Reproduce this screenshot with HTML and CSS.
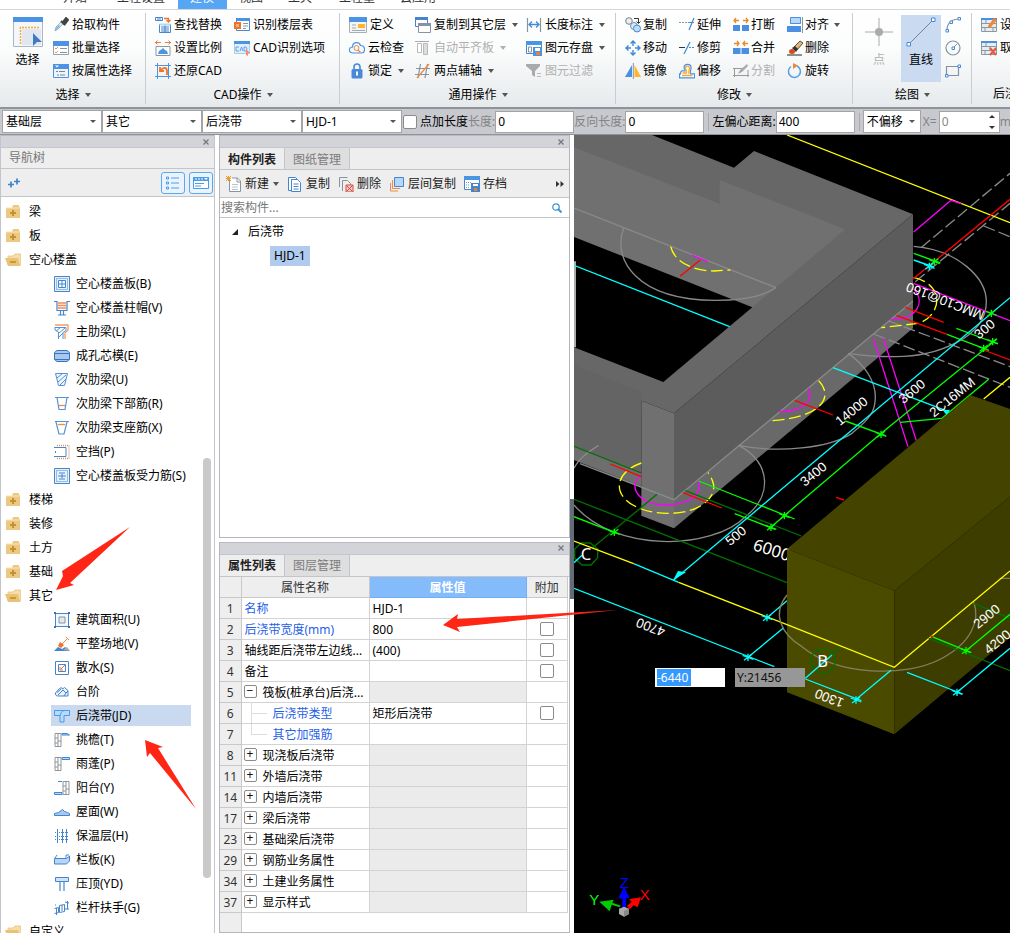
FILE: index.html
```html
<!DOCTYPE html>
<html lang="zh-CN">
<head>
<meta charset="utf-8">
<title>建模</title>
<link rel="stylesheet" href="styles.css">
</head>
<body>
<svg class="defs" aria-hidden="true">
  <symbol id="dropper" viewBox="0 0 16 16"><path d="M2 14l1-4 6-6 2 2-6 6z" fill="#dfe8ee" stroke="#8aa" stroke-width=".8"/><path d="M2 14l1-3 3-3 1 1-4 4z" fill="#6db3ee"/><path d="M8 4l4 4M10 5l3-4 2 2-3 4z" stroke="#444" stroke-width="2" fill="#444"/></symbol>
  <symbol id="checklist" viewBox="0 0 16 16"><path d="M.5 2.500h15v12H.5z" fill="#fff" stroke="#8fa3b5"/><path d="M0 1h16v5H0z" fill="#4b93e3"/><path d="M2 8l1 1 2-2M2 12l1 1 2-2" stroke="#f5933c" fill="none"/><path d="M7 8.500h7M7 12.500h7" stroke="#8794a0"/></symbol>
  <symbol id="proplist" viewBox="0 0 16 16"><path d="M.5 2.500h15v12H.5z" fill="#eef4fa" stroke="#4b93e3"/><path d="M0 1h16v5H0z" fill="#4b93e3"/><path d="M2 2.500h4l-2 2z" fill="#fff"/><path d="M3 8.500h2M6 8.500h6M4 12h2M7 12h5" stroke="#7b8894"/></symbol>
  <symbol id="find" viewBox="0 0 16 16"><path d="M.5.500h7v3h-7zM3 1v2M5 1v2M4.500 7.500h11v8h-11zM6 10h8M6 12h8M6 14h8M10 7v8" fill="none" stroke="#4786cc"/><path d="M4.500 6.500h11v2h-11z" fill="#b9d7f7"/><path d="M9 1.500h4.500V4M11.500 3l2 2 2-2" stroke="#e8752e" fill="none" stroke-width="1.300"/></symbol>
  <symbol id="scale" viewBox="0 0 16 16"><path d="M1 6.500h14v9H1z" fill="#fff" stroke="#8996a1"/><path d="M3 14l1-3 3-2 1-1 2 2 2 1 1 3z" fill="#4b93e3"/><path d="M0 2.500h6M2.500.500l-2 2 2 2M16 2.500h-6M13.500.500l2 2-2 2" stroke="#ee7a35" fill="none"/></symbol>
  <symbol id="restore" viewBox="0 0 16 16"><path d="M2.500 0v16M0 2.500h16M13.500 0v16M0 13.500h16" stroke="#4b93e3"/><path d="M12 12V8c0-4-4-4-6-1M5 4v4h4" fill="none" stroke="#ef7427" stroke-width="1.800"/></symbol>
  <symbol id="floors" viewBox="0 0 16 16"><path d="M2.500 1.500h13v12h-13z" fill="#fff" stroke="#4b87c8"/><path d="M2 1h14v3H2z" fill="#4b93e3"/><path d="M0 5h7v7H0z" fill="#ee7427"/><path d="M2 7h3v3H2z" fill="#f7ad76"/><path d="M9 6.500h5M9 9h5M9 11.500h3" stroke="#8996a1"/></symbol>
  <symbol id="cadscan" viewBox="0 0 16 16"><path d="M.5 1.500h15v12H.5z" fill="#e1eefc" stroke="#a8cdf2"/><path d="M0 1h16v3H0z" fill="#4b93e3"/><path d="M5 7H2v4h3M6 11l1.500-4L9 11M10 7h2l1 2-1 2h-2z" fill="none" stroke="#63a2e5"/><path d="M12 9l4 4-2 .300V16l-1.500-1L12 16z" fill="#f58e68"/></symbol>
  <symbol id="define" viewBox="0 0 18 16"><path d="M.5.500h17v15H.5z" fill="#f5f5f5" stroke="#a6b0b8"/><path d="M0 0h18v5H0z" fill="#4b93e3"/><path d="M9 7h7v4H9z" fill="#ffb52e"/><path d="M3 8h4M3 11h4M3 13.500h13" stroke="#a3abb2"/></symbol>
  <symbol id="cloud" viewBox="0 0 16 16"><path d="M4 13C-1 13-.500 7 3.500 7 3.500 2 10 1 11.500 5.500c5 0 5.500 7 1 7.500z" fill="#f3f9ff" stroke="#4b93e3" stroke-width="1.200"/><circle cx="7.500" cy="8" r="2.500" fill="none" stroke="#ef8b43"/><path d="M9 10l2.500 2.500" stroke="#ef8b43" stroke-width="1.500"/></symbol>
  <symbol id="lock" viewBox="0 0 16 16"><path d="M5 7V4c0-4 6-4 6 0v3" fill="none" stroke="#4889dc" stroke-width="1.600"/><rect x="2.500" y="6" width="11" height="9.500" rx="1.500" fill="#4889dc"/><path d="M8 8.500v4" stroke="#fff" stroke-width="2"/></symbol>
  <symbol id="copyfloor" viewBox="0 0 16 16"><path d="M.5.500h12v9H.5z" fill="#fff" stroke="#4584cc"/><path d="M0 0h13v3H0z" fill="#4584cc"/><path d="M3.500 6.500h12v9h-12z" fill="#fff" stroke="#8793a0"/><path d="M3 6h13v3H3z" fill="#8793a0"/></symbol>
  <symbol id="flatten" viewBox="0 0 16 16"><path d="M0 1.500h14" stroke="#aaa"/><path d="M2.500 3.500h4v9h-4z" fill="#fff" stroke="#b9b9b9"/><path d="M8.500 3.500h4v11h-4z" fill="#ddd" stroke="#b9b9b9"/></symbol>
  <symbol id="axis2" viewBox="0 0 16 16"><path d="M5.500 1L3 15M12.500 1L10 15M1 5.500h14M0 11.500h14" stroke="#8693a0" stroke-width="1.200"/><path d="M14 1L2 15" stroke="#ef8b43" stroke-width="1.300"/></symbol>
  <symbol id="dim" viewBox="0 0 16 16"><path d="M1.500 1v14M14.500 1v14" stroke="#8a949e" stroke-width="1.200"/><path d="M3 7.500h10M6 4.500l-3 3 3 3M10 4.500l3 3-3 3" fill="none" stroke="#4489d8" stroke-width="1.300"/></symbol>
  <symbol id="savegfx" viewBox="0 0 16 16"><path d="M.5 1.500h15v12H.5z" fill="#fff" stroke="#4b87c8"/><path d="M0 1h16v4H0z" fill="#4b93e3"/><path d="M2.500 7h3v5h-3z" fill="none" stroke="#8793a0"/><path d="M7 7h9v9H7z" fill="#4b93e3"/><path d="M9 8h5v3H9z" fill="#fff"/><path d="M10 12h4v3h-4z" fill="#ef8033"/></symbol>
  <symbol id="filter" viewBox="0 0 16 16"><path d="M0 1h14v2L9 8v6l-3-2V8L0 3z" fill="#aaa"/><path d="M11 10.500h4M11 13.500h4" stroke="#bbb"/></symbol>
  <symbol id="copy2" viewBox="0 0 16 16"><circle cx="4" cy="4" r="3.300" fill="#eee" stroke="#738390"/><circle cx="9" cy="9" r="3.500" fill="#d8ecfb" stroke="#6d8eaa"/><circle cx="12" cy="11.500" r="3.500" fill="#bddefa" stroke="#4489d8"/><path d="M9 1.500h4.500V6M11.500 4.500l2 2 2-2" fill="none" stroke="#333"/></symbol>
  <symbol id="move" viewBox="0 0 16 16"><path d="M8 1v5M8 10v5M1 8h5M10 8h5M5.500 3.500L8 1l2.500 2.500M5.500 12.500L8 15l2.500-2.500M3.500 5.500L1 8l2.500 2.500M12.500 5.500L15 8l-2.500 2.500" fill="none" stroke="#3f88dc" stroke-width="1.400"/></symbol>
  <symbol id="mirror" viewBox="0 0 16 16"><path d="M7 2v12H0z" fill="#4a90e2"/><path d="M9.500 2v12H16z" fill="#ffb52e"/><path d="M8.300 0v16" stroke="#8793a0"/></symbol>
  <symbol id="extend" viewBox="0 0 16 16"><path d="M0 5.500h10" stroke="#8796a3" stroke-dasharray="2 1"/><path d="M15 1l-5 12M10 5.500h5" stroke="#4489d8" stroke-width="1.200"/></symbol>
  <symbol id="trim" viewBox="0 0 16 16"><path d="M10 7.500h6" stroke="#4489d8" stroke-dasharray="2 1"/><path d="M0 7.500h6" stroke="#333"/><path d="M11 2L5 14" stroke="#4489d8" stroke-width="1.300"/></symbol>
  <symbol id="offset" viewBox="0 0 16 16"><path d="M.6 14.800h15v-4h-4c-1-2 .5-4 .5-6 0-4.500-7-4.500-7 0 0 1 .8 1.500 1 3h-3c-1.500 0-1.500 1.500-1.500 3h-1z" fill="#fff" stroke="#4a90e2" stroke-width="1.200"/><path d="M3 12.500h10.500M3.500 10h4c.5-2-1-3.500-1-5 0-2.500 4-2.500 4 0 0 2-1.500 3.500-.5 6" fill="none" stroke="#f5a82c" stroke-width="1.300"/></symbol>
  <symbol id="split" viewBox="0 0 16 16"><path d="M0 8h7v6H0zM9 8h7v6H9z" fill="#4a90e2"/><path d="M1 3.500h5M3 1L1 3.500 3 6M15 3.500h-5M13 1l2 2.500L13 6" fill="none" stroke="#e98a20" stroke-width="1.300"/></symbol>
  <symbol id="merge" viewBox="0 0 16 16"><path d="M0 8h7.500v6H0zM8.500 8H16v6H8.500z" fill="#4a90e2"/><path d="M1 3.500h5M4 1l2 2.500L4 6M15 3.500h-5M12 1l-2 2.500L12 6" fill="none" stroke="#e98a20" stroke-width="1.300"/></symbol>
  <symbol id="cut" viewBox="0 0 16 16"><path d="M1.500 5v9M15 7v7M0 5.500h9M0 12.500h16" stroke="#999" fill="none"/><path d="M5 11l2-4 7-6 1 2-6 6z" fill="#aaa"/></symbol>
  <symbol id="align" viewBox="0 0 16 16"><path d="M3.500.500h10v6h-10z" fill="#b5d8fa" stroke="#4a90e2"/><path d="M0 9h14v6H0z" fill="#4a90e2"/><path d="M15.500 0v16" stroke="#8894a0"/></symbol>
  <symbol id="erase" viewBox="0 0 16 16"><path d="M0 15h15" stroke="#222"/><path d="M7 7l6-6 3 2-6 7z" fill="#e9b173" stroke="#553"/><path d="M5 8l3-2 3 3-2 3z" fill="#333"/><ellipse cx="5" cy="11.500" rx="3" ry="2.500" fill="#d94b1c"/></symbol>
  <symbol id="rotate" viewBox="0 0 16 16"><path d="M10 3a6 6 0 1 1-6 .500" fill="none" stroke="#5b9fe6" stroke-width="1.500"/><path d="M6 0l5 2.500L6 6z" fill="#ef8532"/></symbol>
  <symbol id="curve" viewBox="0 0 16 16"><path d="M2 13C2 6 7 2 14 2" fill="none" stroke="#8592a0" stroke-width="1.200"/><path d="M1 12.500h2.500V15H1zM5 4h2.500v2.500H5zM13 .500h2.500V3H13z" fill="#fff" stroke="#4489d8"/></symbol>
  <symbol id="circle" viewBox="0 0 16 16"><circle cx="8" cy="8" r="7" fill="none" stroke="#8592a0" stroke-width="1.200"/><path d="M8 8l4-4" stroke="#8592a0"/><path d="M7 7h2.500v2.500H7z" fill="#fff" stroke="#4489d8"/></symbol>
  <symbol id="rect" viewBox="0 0 16 16"><path d="M1.500 3.500h12v9h-12z" fill="none" stroke="#8592a0" stroke-width="1.200"/><path d="M.5 11.500H3V14H.5zM13 2h2.500v2.500H13z" fill="#fff" stroke="#4489d8"/></symbol>
  <symbol id="wall" viewBox="0 0 16 16"><path d="M.5 2.500h15v12H.5z" fill="#e7ecf0" stroke="#8a98a4"/><path d="M0 6.500h16M0 10.500h16M5 3v4M9 7v4M4 11v4M12 11v4" stroke="#8a98a4"/><path d="M0 2h16" stroke="#4a90e2" stroke-width="2"/></symbol>
  <symbol id="pencil" viewBox="0 0 16 16"><path d="M7 9l6-8 3 2-6 7-3 1z" fill="#f18731"/></symbol>
  <symbol id="redx" viewBox="0 0 16 16"><path d="M9 8l6 7M15 8l-6 7" stroke="#e7593f" stroke-width="2"/></symbol>
  <symbol id="close" viewBox="0 0 6 6"><path d="M.5.500l5 5M5.500.500l-5 5" stroke="#777" stroke-width="1.300"/></symbol>
  <symbol id="folder" viewBox="0 0 16 14"><path d="M8 0h6v2h1v11H1V3h6z" fill="#edc880"/><path d="M1 3h14" stroke="#f7e3b8"/><path d="M8 5v6M5 8h6" stroke="#c1923a" stroke-width="2"/></symbol>
  <symbol id="open" viewBox="0 0 16 14"><path d="M3 3h5l2-2h6v11H3z" fill="#f5ddaa" stroke="#e5bf72" stroke-width=".7"/><path d="M0 5h13l2 8H3z" fill="#e9c276"/><path d="M5 9h6" stroke="#b98a33" stroke-width="1.500"/></symbol>
  <symbol id="t-slab" viewBox="0 0 16 16"><path d="M.5.500h15v15H.5z" fill="#e8f1fb" stroke="#4585cc"/><path d="M2.500 2.500h11v11h-11z" fill="none" stroke="#4585cc" stroke-dasharray="1 1"/><path d="M4.500 4.500h7v7h-7zM8 4v8M4 8h8" fill="#fff" stroke="#4585cc"/></symbol>
  <symbol id="t-cap" viewBox="0 0 16 16"><path d="M0 1.500h3v9h10v-9h3M6.500 11v4M9.500 11v4M4 15h8" fill="none" stroke="#4585cc" stroke-width="1.200"/><path d="M4 3h8M4 5.500h8M4 8h8" stroke="#ef8b53" stroke-width="1.300"/></symbol>
  <symbol id="t-main" viewBox="0 0 16 16"><path d="M1 3.500h11v3l-3 2V15M4.500 15V8L1 6V3M2 7l4-3M5 9l6-5M5 13l4-4" fill="none" stroke="#5592d5"/><path d="M1 1h13v5l-3 3v6" fill="none" stroke="#f29b6c" stroke-width="1.300"/></symbol>
  <symbol id="t-core" viewBox="0 0 16 16"><path d="M3 2.500h10l2.500 2v7l-2.500 2H3l-2.500-2v-7z" fill="#a7c8f0" stroke="#3b73b8"/><path d="M1 5.500h14M1 11.500h14" stroke="#3b73b8"/></symbol>
  <symbol id="t-sec" viewBox="0 0 16 16"><path d="M1.500 1.500h12l-3 12h-6z" fill="#edf5fd" stroke="#5592d5"/><path d="M3 6l5-4M4 10l8-7M6 13l6-6" stroke="#5592d5"/></symbol>
  <symbol id="t-bot" viewBox="0 0 16 16"><path d="M1 1.500h2l2 12h6l2-12h2M3 1.500h10" fill="none" stroke="#5592d5" stroke-width="1.200"/><path d="M5 9.500h6" stroke="#ef8b43" stroke-width="1.300"/></symbol>
  <symbol id="t-sup" viewBox="0 0 16 16"><path d="M1 1.500h14M2 2l3 12h5l3-12" fill="none" stroke="#5592d5" stroke-width="1.200"/><path d="M4 4.500h7" stroke="#ef8b43" stroke-width="1.300"/></symbol>
  <symbol id="t-gap" viewBox="0 0 16 16"><path d="M0 3.500h12v9H0M1.500 7v2" fill="none" stroke="#4585cc"/><path d="M3 1.500h12v13H3" fill="none" stroke="#ef8b53" stroke-width="1.300" stroke-dasharray="1 1"/></symbol>
  <symbol id="t-force" viewBox="0 0 16 16"><path d="M.5.500h15v15H.5z" fill="#e8f1fb" stroke="#4585cc"/><path d="M2.500 2.500h11v11h-11z" fill="none" stroke="#4585cc" stroke-dasharray="1 1"/><path d="M8 4v8M4 8h8M5 5h2M9 5h2M5 11h2M9 11h2" stroke="#4585cc"/></symbol>
  <symbol id="t-area" viewBox="0 0 16 16"><path d="M1.500 1.500h13v13h-13z" fill="#f2f8ff" stroke="#4585cc"/><path d="M5 5h6v6H5z" fill="#e5e7ea" stroke="#8795a3"/><path d="M0 0h2v2H0zM14 0h2v2h-2zM0 14h2v2H0zM14 14h2v2h-2z" fill="#476f9c"/></symbol>
  <symbol id="t-level" viewBox="0 0 16 16"><path d="M0 15l4-4 4 2 3-2 5 4z" fill="#4585cc"/><path d="M9 14l4-3 3 4z" fill="#aaa"/><path d="M7 9l7-7M12 1l3 3" stroke="#ef8b43"/><path d="M4 10l2-4 4 3-3 3z" fill="#ee7427"/></symbol>
  <symbol id="t-apron" viewBox="0 0 16 16"><path d="M1.500 1.500h13v13h-13zM4.500 4.500h7v7h-7z" fill="#fff" stroke="#4585cc"/><path d="M11 5l-4 4M6 7v3h3" fill="none" stroke="#ef7427"/></symbol>
  <symbol id="t-step" viewBox="0 0 16 16"><path d="M1.500 9l4-4.500c1-1 3-1 3 .5l2-1.500 3.500 3v5.500H4c-2 0-3-1.500-2.500-3z" fill="#eaf3fc" stroke="#4585cc"/><path d="M3 8.500l4-3.500M4 11l5-5M9 6l3 3-2 3M12 9l2-2" fill="none" stroke="#4585cc"/></symbol>
  <symbol id="t-strip" viewBox="0 0 16 16"><path d="M.5 2.500h15v5H10v6.500H6V7.500H.5z" fill="#b9dafb" stroke="#4a9be8"/><path d="M10 2.500C8 3 6.500 5 6 8" fill="none" stroke="#4a9be8"/></symbol>
  <symbol id="t-eave" viewBox="0 0 16 16"><path d="M1 1.500h6v13H1zM4 1v13M1 6h3M4 9h3M1 11h3" fill="none" stroke="#8f9498"/><path d="M8 1.500h5l2.500 1.500H8z" fill="#b9dafb" stroke="#4585cc"/></symbol>
  <symbol id="t-canopy" viewBox="0 0 16 16"><path d="M1 1.500h6v13H1zM4 1v13M1 6h3M4 9h3M1 11h3" fill="none" stroke="#8f9498"/><path d="M8 1.500h7.500v2H8z" fill="#b9dafb" stroke="#4585cc"/></symbol>
  <symbol id="t-balcony" viewBox="0 0 16 16"><path d="M9 1.500h6v13H9zM12 1v13M9 6h3M12 9h3M9 11h3" fill="none" stroke="#8f9498"/><path d="M4 1.500h4M.5 12.500H8v2H.5z" fill="#b9dafb" stroke="#4585cc"/></symbol>
  <symbol id="t-roof" viewBox="0 0 16 16"><path d="M.5 11.500v-2l4-1 4-3 2 2 3 1 2 1v2z" fill="#a7c8f0" stroke="#4585cc"/></symbol>
  <symbol id="t-insul" viewBox="0 0 16 16"><path d="M3.500 1v14M8.500 1v14M12.500 1v14" stroke="#4585cc"/><path d="M1 4.500h14M1 8.500h14M1 11.500h14" stroke="#4585cc" stroke-dasharray="1 1"/></symbol>
  <symbol id="t-rail" viewBox="0 0 16 16"><path d="M.5 6.500h12l3-2.500v5l-3 3H.5z" fill="#b9d4f4" stroke="#4585cc"/><path d="M1 6l2-3M12 6V3h3" fill="none" stroke="#4585cc"/></symbol>
  <symbol id="t-coping" viewBox="0 0 16 16"><path d="M1.500 1.500h13v4h-13z" fill="#cfe3fa" stroke="#4585cc"/><path d="M6 6v9M10 6v9" stroke="#4585cc" stroke-width="1.200"/></symbol>
  <symbol id="t-hand" viewBox="0 0 16 16"><path d="M.5 8.500l4-1v5l-4 1M2.500 8v7M5.500 5.500l5-1v7l-5 1zM8 5v6M11 2l4 1M13.500 1v8M11 9h4M1 5h1" fill="none" stroke="#4585cc"/></symbol>
</svg>

<nav class="tabs">
  <button class="tab">开始</button><button class="tab">工程设置</button><button class="tab on">建模</button><button class="tab">视图</button><button class="tab">工具</button><button class="tab">工程量</button><button class="tab">云应用</button>
</nav>

<header class="ribbon">
  <section class="group g-select">
    <div class="cmds">
      <button class="big"><svg class="i30" viewBox="0 0 30 30"><path d="M.5.500h29v29H.5z" fill="#f3f6fa" stroke="#a9b7c6"/><path d="M0 0h30v5H0z" fill="#4b93e3"/><path d="M7.500 27V10.500H27" fill="none" stroke="#f3ae2c" stroke-width="1.500" stroke-dasharray="2 1"/><path d="M9 12h19v16H9z" fill="#e2e7ef"/><path d="M20 16l9 9h-5l-4 4z" fill="#3f7bc4"/></svg>选择</button>
      <div class="col">
        <button class="cmd"><svg><use href="#dropper"/></svg>拾取构件</button>
        <button class="cmd"><svg><use href="#checklist"/></svg>批量选择</button>
        <button class="cmd"><svg><use href="#proplist"/></svg>按属性选择</button>
      </div>
    </div>
    <button class="gname">选择<i class="caret"></i></button>
  </section>
  <section class="group g-cad">
    <div class="cmds">
      <div class="col">
        <button class="cmd"><svg><use href="#find"/></svg>查找替换</button>
        <button class="cmd"><svg><use href="#scale"/></svg>设置比例</button>
        <button class="cmd"><svg><use href="#restore"/></svg>还原CAD</button>
      </div>
      <div class="col">
        <button class="cmd"><svg><use href="#floors"/></svg>识别楼层表</button>
        <button class="cmd"><svg><use href="#cadscan"/></svg>CAD识别选项</button>
      </div>
    </div>
    <button class="gname">CAD操作<i class="caret"></i></button>
  </section>
  <section class="group g-common">
    <div class="cmds">
      <div class="col">
        <button class="cmd"><svg class="wide"><use href="#define"/></svg>定义</button>
        <button class="cmd"><svg><use href="#cloud"/></svg>云检查</button>
        <button class="cmd"><svg><use href="#lock"/></svg>锁定<i class="caret"></i></button>
      </div>
      <div class="col">
        <button class="cmd"><svg><use href="#copyfloor"/></svg>复制到其它层<i class="caret"></i></button>
        <button class="cmd" disabled><svg><use href="#flatten"/></svg>自动平齐板<i class="caret"></i></button>
        <button class="cmd"><svg><use href="#axis2"/></svg>两点辅轴<i class="caret"></i></button>
      </div>
      <div class="col">
        <button class="cmd"><svg><use href="#dim"/></svg>长度标注<i class="caret"></i></button>
        <button class="cmd"><svg><use href="#savegfx"/></svg>图元存盘<i class="caret"></i></button>
        <button class="cmd" disabled><svg><use href="#filter"/></svg>图元过滤</button>
      </div>
    </div>
    <button class="gname">通用操作<i class="caret"></i></button>
  </section>
  <section class="group g-modify">
    <div class="cmds">
      <div class="col">
        <button class="cmd"><svg><use href="#copy2"/></svg>复制</button>
        <button class="cmd"><svg><use href="#move"/></svg>移动</button>
        <button class="cmd"><svg><use href="#mirror"/></svg>镜像</button>
      </div>
      <div class="col">
        <button class="cmd"><svg><use href="#extend"/></svg>延伸</button>
        <button class="cmd"><svg><use href="#trim"/></svg>修剪</button>
        <button class="cmd"><svg><use href="#offset"/></svg>偏移</button>
      </div>
      <div class="col">
        <button class="cmd"><svg><use href="#split"/></svg>打断</button>
        <button class="cmd"><svg><use href="#merge"/></svg>合并</button>
        <button class="cmd" disabled><svg><use href="#cut"/></svg>分割</button>
      </div>
      <div class="col">
        <button class="cmd"><svg><use href="#align"/></svg>对齐<i class="caret"></i></button>
        <button class="cmd"><svg><use href="#erase"/></svg>删除</button>
        <button class="cmd"><svg><use href="#rotate"/></svg>旋转</button>
      </div>
    </div>
    <button class="gname">修改<i class="caret"></i></button>
  </section>
  <section class="group g-draw">
    <div class="cmds">
      <button class="big" disabled><svg class="i30" viewBox="0 0 30 30"><path d="M15 1v28M1 15h28" stroke="#aaa"/><circle cx="15" cy="15" r="4" fill="#aaa"/></svg>点</button>
      <button class="big on"><svg class="i30" viewBox="0 0 30 30"><path d="M3 27L27 3" stroke="#6f86a3"/><path d="M1 25.500h3.500V29H1zM25.500 1H29v3.500h-3.500z" fill="#fff" stroke="#4489d8"/></svg>直线</button>
      <div class="col">
        <button class="cmd" aria-label="弧线"><svg><use href="#curve"/></svg></button>
        <button class="cmd" aria-label="圆"><svg><use href="#circle"/></svg></button>
        <button class="cmd" aria-label="矩形"><svg><use href="#rect"/></svg></button>
      </div>
    </div>
    <button class="gname">绘图<i class="caret"></i></button>
  </section>
  <section class="group g-more">
    <div class="cmds">
      <div class="col">
        <button class="cmd"><svg><use href="#wall"/><use href="#pencil"/></svg>设置</button>
        <button class="cmd"><svg><use href="#wall"/><use href="#redx"/></svg>取消</button>
      </div>
    </div>
    <button class="gname">后浇带</button>
  </section>
</header>

<form class="options">
  <span class="pick"><select aria-label="楼层"><option>基础层</option></select></span>
  <span class="pick"><select aria-label="分类"><option>其它</option></select></span>
  <span class="pick"><select aria-label="类型"><option>后浇带</option></select></span>
  <span class="pick"><select aria-label="构件"><option>HJD-1</option></select></span>
  <input type="checkbox" class="box" id="addlen"><label class="addlen" for="addlen">点加长度</label>
  <label class="dim" for="len">长度:</label><input class="num" id="len" value="0">
  <label class="dim" for="rlen">反向长度:</label><input class="num" id="rlen" value="0">
  <i class="sep"></i>
  <label for="ecc">左偏心距离:</label><input class="num" id="ecc" value="400">
  <i class="sep"></i>
  <span class="pick short"><select aria-label="偏移方式"><option>不偏移</option></select></span>
  <label class="dim xlab" for="xoff">X=</label><span class="spin"><input class="num" id="xoff" value="0" disabled></span>
  <span class="dim">mm</span>
</form>

<main class="work">
  <aside class="navpane">
    <div class="strip"><button aria-label="关闭"><svg><use href="#close"/></svg></button></div>
    <h2 class="navtitle">导航树</h2>
    <div class="navtools">
      <button class="plus" aria-label="添加"><svg viewBox="0 0 12 10"><path d="M3 3.500v6M0 6.500h6M9 .500v6M6 3.500h6" stroke="#3f82d0" stroke-width="1.700"/></svg></button>
      <button class="mode" aria-label="列表视图"><svg viewBox="0 0 16 16"><path d="M1.500 2h2v2h-2zM1.500 7h2v2h-2zM1.500 12h2v2h-2zM6 3h8M6 8h8M6 13h8" fill="none" stroke="#4a9be8"/></svg></button>
      <button class="mode" aria-label="面板视图"><svg viewBox="0 0 16 16"><path d="M.5 2.500h15v11H.5z" fill="#fff" stroke="#4a9be8"/><path d="M0 2h16v4H0z" fill="#4a9be8"/><path d="M2 4h2M5 4h2M8 4h2" stroke="#fff"/><path d="M11 3h4l-2 2z" fill="#fff"/><path d="M2 8.500h9M2 11h6" stroke="#4a9be8"/></svg></button>
    </div>
    <div class="treebox">
      <ul class="tree">
        <li><button class="node"><svg><use href="#folder"/></svg>梁</button></li>
        <li><button class="node"><svg><use href="#folder"/></svg>板</button></li>
        <li><button class="node"><svg><use href="#open"/></svg>空心楼盖</button>
          <ul>
            <li><button class="leaf"><svg><use href="#t-slab"/></svg>空心楼盖板(B)</button></li>
            <li><button class="leaf"><svg><use href="#t-cap"/></svg>空心楼盖柱帽(V)</button></li>
            <li><button class="leaf"><svg><use href="#t-main"/></svg>主肋梁(L)</button></li>
            <li><button class="leaf"><svg><use href="#t-core"/></svg>成孔芯模(E)</button></li>
            <li><button class="leaf"><svg><use href="#t-sec"/></svg>次肋梁(U)</button></li>
            <li><button class="leaf"><svg><use href="#t-bot"/></svg>次肋梁下部筋(R)</button></li>
            <li><button class="leaf"><svg><use href="#t-sup"/></svg>次肋梁支座筋(X)</button></li>
            <li><button class="leaf"><svg><use href="#t-gap"/></svg>空挡(P)</button></li>
            <li><button class="leaf"><svg><use href="#t-force"/></svg>空心楼盖板受力筋(S)</button></li>
          </ul></li>
        <li><button class="node"><svg><use href="#folder"/></svg>楼梯</button></li>
        <li><button class="node"><svg><use href="#folder"/></svg>装修</button></li>
        <li><button class="node"><svg><use href="#folder"/></svg>土方</button></li>
        <li><button class="node"><svg><use href="#folder"/></svg>基础</button></li>
        <li><button class="node"><svg><use href="#open"/></svg>其它</button>
          <ul>
            <li><button class="leaf"><svg><use href="#t-area"/></svg>建筑面积(U)</button></li>
            <li><button class="leaf"><svg><use href="#t-level"/></svg>平整场地(V)</button></li>
            <li><button class="leaf"><svg><use href="#t-apron"/></svg>散水(S)</button></li>
            <li><button class="leaf"><svg><use href="#t-step"/></svg>台阶</button></li>
            <li><button class="leaf on"><svg><use href="#t-strip"/></svg>后浇带(JD)</button></li>
            <li><button class="leaf"><svg><use href="#t-eave"/></svg>挑檐(T)</button></li>
            <li><button class="leaf"><svg><use href="#t-canopy"/></svg>雨蓬(P)</button></li>
            <li><button class="leaf"><svg><use href="#t-balcony"/></svg>阳台(Y)</button></li>
            <li><button class="leaf"><svg><use href="#t-roof"/></svg>屋面(W)</button></li>
            <li><button class="leaf"><svg><use href="#t-insul"/></svg>保温层(H)</button></li>
            <li><button class="leaf"><svg><use href="#t-rail"/></svg>栏板(K)</button></li>
            <li><button class="leaf"><svg><use href="#t-coping"/></svg>压顶(YD)</button></li>
            <li><button class="leaf"><svg><use href="#t-hand"/></svg>栏杆扶手(G)</button></li>
          </ul></li>
        <li><button class="node"><svg><use href="#open"/></svg>自定义</button></li>
      </ul>
      <i class="thumb"></i>
    </div>
  </aside>

  <div class="mid">
    <section class="panel parts">
      <div class="strip"><button aria-label="关闭"><svg><use href="#close"/></svg></button></div>
      <div class="ptabs"><button class="on">构件列表</button><button>图纸管理</button></div>
      <div class="ptools">
        <button class="t-new"><svg viewBox="0 0 16 16"><path d="M3.500 3v12.500h11V5l-3-3H6M11 2v4h4" fill="#fff" stroke="#8795a3"/><path d="M6 8.500h6M6 11h6M6 13.500h6" stroke="#bcc5cd"/><path d="M0 0l5 5M5 0L0 5M2.500 0v5M0 2.500h5" stroke="#ef9a2c"/></svg>新建<i class="caret"></i></button>
        <button><svg viewBox="0 0 16 16"><path d="M1.500 1.500h7l3 3v10h-10z" fill="#fff" stroke="#4585cc"/><path d="M4.500 3.500h6l3 3v9h-9z" fill="#fff" stroke="#4585cc"/><path d="M6.500 8h5M6.500 10.500h5M6.500 13h5" stroke="#4585cc"/></svg>复制</button>
        <button><svg viewBox="0 0 16 16"><path d="M1.500 11V1.500h8M4.500 15V4.500h5l3 3V9" fill="none" stroke="#8795a3"/><path d="M8 9h7v7H8z" fill="#f4cfcb" stroke="#d5453b"/><path d="M9 10l5 5M14 10l-5 5" stroke="#d5453b"/></svg>删除</button>
        <button><svg viewBox="0 0 16 16"><path d="M5.500 1.500h9v9h-9z" fill="#b5d8fa" stroke="#4585cc"/><path d="M3.500 4v8.500H11M1.500 7v8H9" fill="none" stroke="#ef8b43"/></svg>层间复制</button>
        <button><svg viewBox="0 0 16 16"><path d="M.5 1.500h15v12H.5z" fill="#fff" stroke="#4585cc"/><path d="M0 0h16v4H0z" fill="#4b93e3"/><path d="M2 6.500h5M2 9h4M2 11.500h4" stroke="#8795a3" stroke-dasharray="1 1"/><path d="M7 7h9v9H7z" fill="#4585cc"/><path d="M9 8h5v2H9z" fill="#fff"/><path d="M10 12h3v3h-3z" fill="#ef8033"/></svg>存档</button>
        <button class="more" aria-label="更多"><svg viewBox="0 0 8 6"><path d="M0 0l3.500 3L0 6zM4.500 0L8 3 4.500 6z" fill="#333"/></svg></button>
      </div>
      <div class="search"><input type="text" aria-label="搜索构件" placeholder="搜索构件..."><svg viewBox="0 0 10 10"><circle cx="4" cy="4" r="3.200" fill="none" stroke="#4096d2" stroke-width="1.300"/><path d="M6.500 6.500L9.500 9.500" stroke="#4096d2" stroke-width="2"/></svg></div>
      <div class="parttree">
        <button class="proot"><svg viewBox="0 0 6 6"><path d="M6 0v6H0z" fill="#222"/></svg>后浇带</button>
        <button class="pleaf">HJD-1</button>
      </div>
    </section>

    <section class="panel props">
      <div class="strip"><button aria-label="关闭"><svg><use href="#close"/></svg></button></div>
      <div class="ptabs"><button class="on">属性列表</button><button>图层管理</button></div>
      <div class="sheet">
        <table>
          <colgroup><col class="c-no"><col class="c-name"><col class="c-val"><col class="c-add"></colgroup>
          <thead><tr><th></th><th>属性名称</th><th class="hot">属性值</th><th>附加</th></tr></thead>
          <tbody>
            <tr><th>1</th><td class="key">名称</td><td>HJD-1</td><td></td></tr>
            <tr><th>2</th><td class="key">后浇带宽度(mm)</td><td>800</td><td class="tick"><input type="checkbox" class="box" aria-label="附加 后浇带宽度"></td></tr>
            <tr><th>3</th><td>轴线距后浇带左边线...</td><td>(400)</td><td class="tick"><input type="checkbox" class="box" aria-label="附加 轴线距"></td></tr>
            <tr><th>4</th><td>备注</td><td></td><td class="tick"><input type="checkbox" class="box" aria-label="附加 备注"></td></tr>
            <tr><th>5</th><td><button class="tog" aria-label="收起">−</button>筏板(桩承台)后浇...</td><td class="off"></td><td></td></tr>
            <tr><th>6</th><td class="key sub">后浇带类型</td><td>矩形后浇带</td><td class="tick"><input type="checkbox" class="box" aria-label="附加 后浇带类型"></td></tr>
            <tr><th>7</th><td class="key sub last">其它加强筋</td><td></td><td></td></tr>
            <tr><th>8</th><td><button class="tog" aria-label="展开">+</button>现浇板后浇带</td><td class="off"></td><td></td></tr>
            <tr><th>11</th><td><button class="tog" aria-label="展开">+</button>外墙后浇带</td><td class="off"></td><td></td></tr>
            <tr><th>14</th><td><button class="tog" aria-label="展开">+</button>内墙后浇带</td><td class="off"></td><td></td></tr>
            <tr><th>17</th><td><button class="tog" aria-label="展开">+</button>梁后浇带</td><td class="off"></td><td></td></tr>
            <tr><th>23</th><td><button class="tog" aria-label="展开">+</button>基础梁后浇带</td><td class="off"></td><td></td></tr>
            <tr><th>29</th><td><button class="tog" aria-label="展开">+</button>钢筋业务属性</td><td class="off"></td><td></td></tr>
            <tr><th>34</th><td><button class="tog" aria-label="展开">+</button>土建业务属性</td><td class="off"></td><td></td></tr>
            <tr><th>37</th><td><button class="tog" aria-label="展开">+</button>显示样式</td><td class="off"></td><td></td></tr>
          </tbody>
        </table>
      </div>
    </section>
  </div>

  <div class="gutter"><button class="grip" aria-label="收起面板"></button></div>

  <div class="view">
    <svg class="scene" viewBox="6 0 1308 2394" preserveAspectRatio="xMinYMin slice">
      <defs>
        <path id="x" d="M-16-6L16 6M-12 9L12-9M0-11V11" fill="none"/>
      </defs>
      <!-- walls -->
      <path d="M6 0H240L486 98L546 48L1023 238L306 835L208 797L6 720z" fill="#676767"/>
      <path d="M6 37L443 206V135L820 283L541 517L6 306z" fill="#707070"/>
      <path d="M6 306L541 517L274 741L6 637z" fill="#000"/>
      <path d="M1023 238V498L306 1094V835z" fill="#5c5c5c"/>
      <path d="M1023 498V580L306 1180V1094z" fill="#696969"/>
      <path d="M6 690L208 770V1056L6 975z" fill="#646464"/>
      <path d="M6 934L208 1014V1051L6 975z" fill="#6e6e6e"/>
      <path d="M208 797L306 835V1180L208 1142z" fill="#707070"/>
      <path d="M6 379h6v258H6z" fill="#aaa"/>
      <g fill="none" stroke-width="4">
        <g stroke="#8a8a8a">
          <path d="M6 219L612 458M155 280C120 370 190 495 430 496C520 496 580 480 612 458"/>
          <path d="M1025 334C1160 345 1243 430 1243 500C1243 610 1090 665 970 665C910 665 860 660 830 655"/>
          <path d="M1023 498L306 1094L24 986M828 655C880 690 910 740 910 785C910 830 895 850 840 895C770 940 620 955 500 931"/>
          <path d="M500 931C600 985 600 1085 520 1145C420 1245 130 1255 6 1110M6 1000C20 970 50 950 80 931"/>
          <path stroke-dasharray="36 12" d="M1047 338L1314 115M1030 440L1314 205M1235 273L1314 305M950 558L1314 695M905 597L1314 757"/>
        </g>
        <path stroke="#ff0" d="M645 0L1314 263M1314 727L1235 792"/>
        <path stroke="#ff0" stroke-dasharray="36 14" d="M296 335C310 390 380 408 425 408L475 405M1025 427C1120 450 1110 540 1040 565L928 578M740 737C790 790 740 850 595 857M208 984C120 1015 120 1090 208 1122C300 1155 430 1125 425 1050C422 1035 415 1022 408 1013"/>
        <path stroke="#f0f" d="M1025 291L1137 196L1168 206M358 360L408 380M1025 445L1314 557M1025 462C1060 500 1040 553 955 554M904 610L1008 935M934 610L1033 917M710 760C725 800 690 830 622 830M208 1020C170 1045 185 1108 285 1110C360 1108 390 1075 380 1035"/>
        <path stroke="#f00" d="M1023 432L1314 193M324 424L384 376M1000 517L1115 562M973 541L1125 598M1235 645L1314 675M668 796L783 840M115 987L208 1025M333 1073L450 1119M792 1087L816 1095"/>
        <path stroke="#007000" d="M6 934L208 1014M340 1067L688 1203M6 1093L645 1343M255 1078L60 1240M28 1224L55 1224L77 1242V1268L57 1290H30L8 1270V1242z"/>
        <path stroke="#0f0" d="M1025 355L1105 384M1125 598L1235 640M1153 580L1278 627M1275 612L925 897L590 1182M1250 733L1110 850L985 862M820 858L940 902M380 1038L668 1152M488 1136L610 1183M6 1145L135 1195"/>
        <path stroke="#0ff" d="M6 391L473 575M1025 375L1085 396M1314 488L822 900L305 1335M783 698L1130 830M185 1286L320 1342M6 1283L30 1261M6 1360L607 1595M585 1448L645 1397M528 1567L635 1478"/>
        <path stroke="#ff0" d="M6 1218L185 1286M320 1342L645 1469"/>
        <g stroke="#0f0"><use href="#x" x="1087" y="380"/><use href="#x" x="1262" y="620"/><use href="#x" x="1235" y="640"/><use href="#x" x="927" y="898"/><use href="#x" x="637" y="1142"/><use href="#x" x="597" y="1177"/><use href="#x" x="127" y="1192"/><use href="#x" x="1258" y="535"/></g>
        <g stroke="#0ff"><use href="#x" x="1072" y="394"/><use href="#x" x="585" y="1448"/><use href="#x" x="528" y="1567"/></g>
      </g>
      <path d="M303 1336L318 1308L342 1312zM1112 826L1134 824L1124 840z" fill="#0ff"/>
      <g class="cad">
        <text transform="translate(804 874) rotate(-39)">14000</text>
        <text transform="translate(994 808) rotate(-39)">3600</text>
        <text transform="translate(1086 848) rotate(-39)">2C16MM</text>
        <text transform="translate(1220 614) rotate(-39)">300</text>
        <text transform="translate(1240 530) rotate(201)">MMC10@160</text>
        <text transform="translate(698 1056) rotate(-39)">3400</text>
        <text transform="translate(474 1234) rotate(-39)">500</text>
        <text transform="translate(282 1480) rotate(201)">4700</text>
        <text class="axis" transform="translate(540 1244) rotate(18)">6000</text>
        <text class="axis" x="26" y="1275">C</text>
      </g>
      <!-- foundation block -->
      <g transform="translate(0 795)">
        <path d="M1195-15L1314 27V290L967 572L645 447z" fill="#444400"/>
        <path d="M645 447L967 572V1003L645 877z" fill="#4b4b00"/>
        <path d="M967 572L1314 290V712L967 1003z" fill="#3d3d00"/>
        <g fill="none" stroke-width="4">
          <path stroke="#808060" d="M645 585C600 640 625 700 690 740C800 830 1000 830 1100 780C1200 730 1225 660 1205 605M1283 535H1314"/>
          <path stroke="#ff0" d="M645 674L967 802L1314 513"/>
          <path stroke="#007000" d="M1070 715L1314 812M1205 610L1314 655M770 773L803 742M739 748H766L788 766V794L768 818H741L719 798V766z"/>
          <path stroke="#0f0" d="M1080 710L1195 757M1182 752L1314 643"/>
          <path stroke="#0ff" d="M700 835L780 765M700 837L868 902M850 900L957 811M1005 817L1172 882M1155 877L1314 745"/>
          <g stroke="#0ff"><use href="#x" x="852" y="900"/><use href="#x" x="1155" y="877"/></g>
          <use href="#x" x="1182" y="752" stroke="#0f0"/>
          <path stroke="#f00" stroke-width="6" d="M1076 710h7"/>
        </g>
        <g class="cad">
          <text transform="translate(1218 688) rotate(-39)">2900</text>
          <text transform="translate(1250 764) rotate(-39)">4200</text>
          <text transform="translate(818 898) rotate(201)">1300</text>
          <text class="axis" x="736" y="800">B</text>
        </g>
      </g>
      <!-- axis gizmo -->
      <g transform="translate(-1071 1785)">
        <path d="M1222 535V505H1210L1227 470L1244 505H1233V535z" fill="#00f"/>
        <path d="M1214 532L1190 524L1184 544L1153 515L1196 509L1192 518L1217 527z" fill="#0c0"/>
        <path d="M1236 528L1250 515L1242 508L1278 502L1268 532L1256 526L1244 538z" fill="#f00"/>
        <path d="M1212 536L1227 530L1242 536V552L1227 560L1212 552z" fill="#aaa"/><path d="M1227 543V560L1242 552V536z" fill="#888"/>
        <g class="gizmo"><text x="1214" y="473" fill="#00f">Z</text><text x="1123" y="524" fill="#0f0">Y</text><text x="1274" y="509" fill="#f00">X</text></g>
      </g>
    </svg>
    <input class="coord cx" aria-label="X" value="-6440">
    <input class="coord cy" aria-label="Y" value="Y:21456" readonly>
  </div>
</main>

<svg class="marks" aria-hidden="true">
  <path d="M130 527L62 571L63 576L56 590L74 585L70 583zM145 740L163 747L158 748L196 809L150 753L147 757zM443 625L458 614L457 619L618 610L457 627L460 632z"/>
</svg>
</body>
</html>
```
FILE: styles.css
```css
* { box-sizing: border-box; }
body {
  margin: 0;
  height: 100vh;
  display: flex;
  flex-direction: column;
  position: relative;
  overflow: hidden;
  background: #fff;
  color: #000;
  font: 12px/16px "Noto Sans", "Noto Sans CJK SC", sans-serif;
}
button, input, select { font: inherit; color: inherit; }
button { border: 0; padding: 0; background: none; white-space: nowrap; text-align: left; }
ul { list-style: none; margin: 0; padding: 0; }
svg { flex: none; display: block; }
.defs { position: absolute; width: 0; height: 0; }
.caret {
  border: 3px solid transparent;
  border-top: 4px solid #555;
  border-bottom: 0;
  margin-left: 3px;
  flex: none;
}

/* tabs */
.tabs {
  flex: none;
  height: 10px;
  padding-left: 50px;
  display: flex;
  align-items: flex-end;
  overflow: hidden;
  border-bottom: 1px solid #d6d6d6;
}
.tab { height: 20px; padding: 0 13px 2px 12px; flex: none; color: #333; }
.tab:first-child { padding-right: 18px; padding-left: 13px; }
.tab:nth-child(6) { padding-left: 14px; }
.tab.on { background: #57a5f5; color: #fff; }

/* ribbon */
.ribbon {
  flex: none;
  height: 97px;
  display: flex;
  overflow: hidden;
  background: linear-gradient(#fff, #fbfcfc 40%, #e6eaec);
}
.group { flex: none; position: relative; display: flex; flex-direction: column; padding-top: 3px; }
.group::after { content: ""; position: absolute; right: 0; top: 3px; bottom: 3px; width: 1px; background: #c9ccd0; }
.g-select { width: 146px; }
.g-cad { width: 194px; }
.g-common { width: 276px; }
.g-modify { width: 237px; }
.g-draw { width: 119px; }
.g-more { width: 120px; }
.cmds { display: grid; height: 69px; justify-content: start; }
.g-select .cmds { grid-template-columns: 53px auto; }
.g-cad .cmds { grid-template-columns: 79px auto; padding-left: 9px; }
.g-common .cmds { grid-template-columns: 66px 111px auto; padding-left: 9px; }
.g-modify .cmds { grid-template-columns: 54px 54px 54px auto; padding-left: 9px; }
.g-draw .cmds { grid-template-columns: 42px 44px auto; padding-left: 6px; }
.g-more .cmds { padding-left: 9px; }
.cmd { display: flex; align-items: center; gap: 3px; height: 23px; }
.cmd svg { width: 16px; height: 16px; }
.cmd svg.wide { width: 18px; }
.g-modify .cmd { gap: 2px; }
.cmd:disabled, .big:disabled { color: #b0b0b0; }
.cmd:disabled .caret { border-top-color: #b0b0b0; }
.big { display: flex; flex-direction: column; align-items: center; gap: 5px; padding-top: 4px; height: 67px; }
.g-select .big { padding-left: 2px; }
.g-draw .big { width: 40px; margin-top: 2px; padding-top: 2px; }
.big.on { background: #c9daf1; }
.i30 { width: 30px; height: 30px; }
.gname { display: flex; align-items: center; justify-content: center; gap: 2px; height: 26px; }
.g-more .gname { justify-content: start; padding-left: 21px; }

/* option bar */
.options {
  flex: none;
  height: 28px;
  display: flex;
  align-items: center;
  padding-left: 2px;
  border-top: 2px solid #8f9397;
  border-bottom: 1px solid #8f9397;
  background: #c7c9ce;
  white-space: nowrap;
  overflow: hidden;
}
.options > * { flex: none; }
.pick { position: relative; width: 100px; height: 23px; }
.pick.short { width: 58px; }
.pick select {
  appearance: none;
  width: 100%;
  height: 100%;
  border: 1px solid #a4a4a4;
  border-radius: 0;
  background: #fff;
  padding: 0 3px;
}
.pick::after {
  content: "";
  position: absolute;
  right: 6px;
  top: 10px;
  border: 3px solid transparent;
  border-top: 3px solid #555;
  border-bottom: 0;
}
.box {
  appearance: none;
  margin: 0;
  width: 14px;
  height: 14px;
  border: 1px solid #8b8b8b;
  border-radius: 2px;
  background: #fff;
}
.options .box { margin: 0 3px 0 1px; }
.dim { color: #858585; }
.num { width: 79px; height: 22px; border: 1px solid #a4a4a4; background: #fff; padding: 0 2px; }
.options .xlab { width: 18px; padding-left: 2px; }
.sep { width: 1px; height: 18px; background: #a9abb0; margin: 0 3px 0 4px; }
.spin { position: relative; }
.spin .num { width: 61px; color: #888; }
.spin::before, .spin::after { content: ""; position: absolute; right: 5px; border: 3px solid transparent; }
.spin::before { top: 4px; border-top: 0; border-bottom: 3px solid #333; }
.spin::after { bottom: 4px; border-bottom: 0; border-top: 3px solid #333; }

/* panes */
.work { flex: 1; min-height: 0; display: flex; }
.strip {
  flex: none;
  height: 13px;
  display: flex;
  align-items: center;
  justify-content: flex-end;
  padding-right: 5px;
  background: #d2d4da;
  border-top: 1px solid #b9bcc2;
  border-bottom: 1px solid #c3c6cc;
}
.strip svg { width: 6px; height: 6px; }

.navpane {
  flex: none;
  width: 215px;
  display: flex;
  flex-direction: column;
  border: solid #c3c5cd;
  border-width: 0 1px;
}
.navtitle {
  flex: none;
  height: 21px;
  margin: 0;
  padding: 2px 8px;
  font-size: 12px;
  font-weight: normal;
  color: #777;
  background: #eee;
  border-bottom: 1px solid #c3c5cd;
}
.navtools {
  flex: none;
  height: 28px;
  display: flex;
  align-items: center;
  gap: 4px;
  padding: 0 1px 0 7px;
  background: #eee;
  border-bottom: 1px solid #c3c5cd;
}
.plus { margin-right: auto; }
.plus svg { width: 12px; height: 10px; }
.mode {
  width: 24px;
  height: 22px;
  display: flex;
  align-items: center;
  justify-content: center;
  border: 1px solid #5aa7f2;
  border-radius: 3px;
  background: #eaf4fe;
}
.mode svg { width: 16px; height: 16px; }
.treebox { position: relative; flex: 1; min-height: 0; overflow: hidden; padding-top: 3px; }
.thumb { position: absolute; top: 261px; right: 3px; width: 8px; height: 420px; border-radius: 4px; background: #c9c9c9; }
.node, .leaf { display: flex; align-items: center; }
.node { height: 24px; gap: 8px; padding-left: 4px; }
.node svg { width: 16px; height: 14px; }
.leaf { height: 21px; width: 140px; gap: 6px; margin: 0 0 3px 50px; padding-left: 3px; }
.tree ul { padding-top: 1px; margin-bottom: -1px; }
.leaf svg { width: 16px; height: 16px; }
.leaf.on { background: #c8d9f0; }

.mid { flex: none; width: 351px; margin-left: 4px; display: flex; flex-direction: column; gap: 4px; background: #fff; }
.panel { display: flex; flex-direction: column; border: 1px solid #b4b6bb; border-top: 0; }
.parts { flex: 403 1 0; min-height: 0; }
.props { flex: 391 1 0; min-height: 0; }
.ptabs { flex: none; height: 22px; display: flex; background: #eee; border-bottom: 1px solid #c3c5cd; }
.ptabs button { width: 65px; padding-top: 2px; text-align: center; background: #dedede; color: #7c7c7c; border-right: 1px solid #c3c5cd; }
.ptabs .on { background: #eee; color: #222; font-weight: bold; }
.ptools {
  flex: none;
  height: 28px;
  display: flex;
  align-items: center;
  gap: 8px;
  padding: 1px 5px 0 6px;
  background: #eee;
  color: #222;
  border-bottom: 1px solid #c3c5cd;
}
.ptools button { display: flex; align-items: center; gap: 3px; }
.ptools .caret { margin-left: 1px; }
.ptools svg { width: 16px; height: 16px; }
.ptools .more { margin-left: auto; }
.ptools .more svg { width: 8px; height: 6px; }
.search { flex: none; height: 20px; display: flex; align-items: center; padding-right: 7px; border-bottom: 1px solid #c3c5cd; }
.search input { flex: 1; min-width: 0; border: 0; padding: 0 1px; height: 18px; outline: 0; }
.search input::placeholder { color: #777; }
.search svg { width: 10px; height: 10px; }
.parttree { flex: 1; padding-top: 4px; display: flex; flex-direction: column; align-items: flex-start; gap: 4px; }
.proot { display: flex; align-items: center; gap: 10px; height: 20px; padding-left: 12px; }
.proot svg { width: 6px; height: 6px; }
.pleaf { height: 20px; margin-left: 50px; padding: 0 4px; background: #b0cbee; }

.sheet { flex: 1; min-height: 0; overflow: hidden; background: linear-gradient(90deg, #eee 21px, #c9c9c9 21px, #c9c9c9 22px, #fff 22px); }
table { table-layout: fixed; width: 348px; border-collapse: collapse; }
.c-no { width: 21px; }
.c-name { width: 128px; }
.c-val { width: 157px; }
tr { height: 21px; }
th, td {
  padding: 2px 3px 0;
  height: 21px;
  line-height: 16px;
  border: 1px solid #d3d3d3;
  border-top: 0;
  border-left: 0;
  white-space: nowrap;
  text-align: left;
}
th { background: #eee; color: #333; font-weight: normal; text-align: center; padding: 2px 0 0; border-color: #c9c9c9; }
td { background: #fff; }
th.hot { background: #83bbfb; color: #fff; font-weight: bold; border-color: #6fb0f5; }
.key { color: #1f5fe8; }
.off { background: #ebebeb; }
.tick { padding: 0; }
.tick .box { display: block; margin: 0 auto; }
.tog {
  width: 13px;
  height: 13px;
  margin: -6px 6px 0 -1px;
  border: 1px solid #8b8b8b;
  border-radius: 2px;
  background: #fff;
  color: #111;
  line-height: 10px;
  text-align: center;
  vertical-align: middle;
}
.sub { padding-left: 31px; background: linear-gradient(#ddd, #ddd) 9px 10px / 16px 1px no-repeat, linear-gradient(#ddd, #ddd) 9px 0 / 1px 100% no-repeat, #fff; }
.sub.last { background: linear-gradient(#ddd, #ddd) 9px 10px / 16px 1px no-repeat, linear-gradient(#ddd, #ddd) 9px 0 / 1px 10px no-repeat, #fff; }

/* 3D view */
.gutter { flex: none; width: 4px; display: flex; align-items: center; background: #fff; }
.grip { width: 4px; height: 100px; margin-top: 30px; background: #636c78; }
.view { flex: 1; min-width: 0; position: relative; overflow: hidden; background: #000; }
.scene { width: 100%; height: 100%; }
.cad { fill: #fff; font: 40px "Liberation Sans", "Noto Sans CJK SC", sans-serif; }
.cad .axis { font: 50px "Noto Sans", sans-serif; }
.gizmo { font: 45px "Liberation Sans", sans-serif; }
.coord { position: absolute; top: 533px; width: 70px; height: 19px; border: 0; padding: 0 2px; }
.cx {
  left: 81px;
  color: #fff;
  background: linear-gradient(#39f, #39f) 2px 1px / 34px 17px no-repeat, #fff;
}
.cy { left: 161px; background: #979797; color: #111; }

/* callout arrows */
.marks { position: absolute; inset: 0; width: 100%; height: 100%; pointer-events: none; }
.marks path { fill: #ff2616; }
```
